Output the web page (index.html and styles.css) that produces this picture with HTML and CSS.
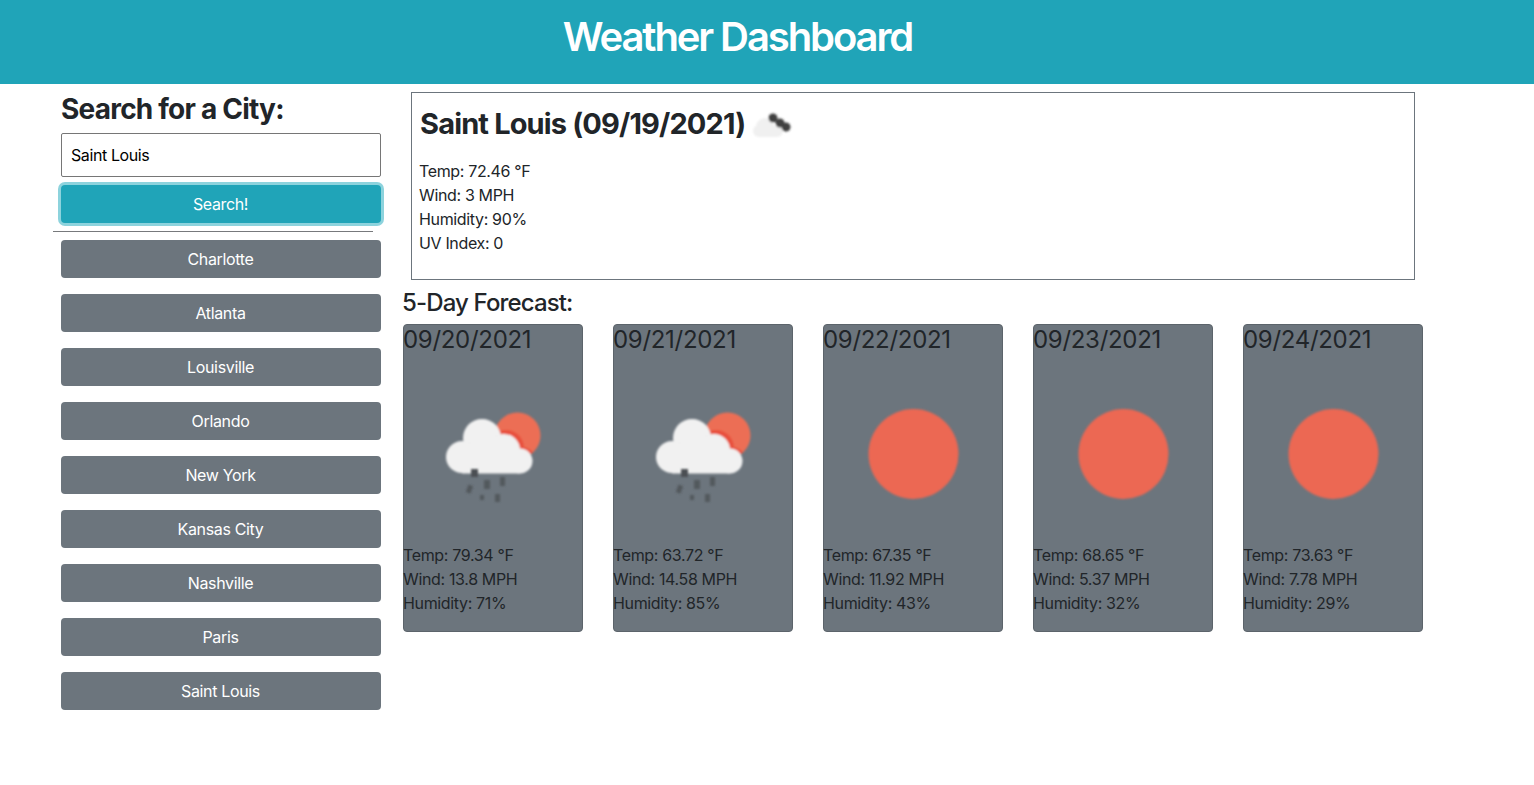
FILE: index.html
```html
<!DOCTYPE html>
<html lang="en">
<head>
<meta charset="utf-8">
<title>Weather Dashboard</title>
<link rel="stylesheet" href="styles.css">
</head>
<body>
<svg class="defs" width="0" height="0" aria-hidden="true">
  <defs>
    <filter id="soft" x="-10%" y="-10%" width="120%" height="120%"><feGaussianBlur stdDeviation="0.9"/></filter>
    <filter id="softer" x="-10%" y="-10%" width="120%" height="120%"><feGaussianBlur stdDeviation="1.2"/></filter>
    <filter id="drops" x="-30%" y="-30%" width="160%" height="160%"><feGaussianBlur stdDeviation="1.1"/></filter>
    <clipPath id="sun-disc"><circle cx="113.5" cy="72.5" r="23"/></clipPath>
    <symbol id="rain" viewBox="0 0 178 180">
      <g filter="url(#soft)">
        <circle cx="113.5" cy="72.5" r="23" fill="#ec6e55"/>
        <g fill="#e8503c" clip-path="url(#sun-disc)">
          <circle cx="102" cy="85" r="18"/>
          <circle cx="118" cy="97" r="13"/>
        </g>
        <g fill="#f1f1f1">
          <circle cx="78" cy="75" r="19"/>
          <circle cx="58" cy="94" r="16"/>
          <circle cx="100" cy="87" r="16"/>
          <circle cx="116" cy="98" r="12.5"/>
          <rect x="58" y="85" width="58" height="25.5"/>
        </g>
      </g>
      <g fill="#4b4f53" filter="url(#drops)">
        <rect x="67" y="106" width="7" height="8"/>
        <rect x="63" y="122" width="5" height="8" opacity=".75" transform="rotate(20 65 126)"/>
        <rect x="80" y="117" width="6" height="9" opacity=".75"/>
        <rect x="96" y="114" width="5" height="9" opacity=".75"/>
        <rect x="76" y="132" width="4" height="5" opacity=".75"/>
        <rect x="91" y="131" width="5" height="8" opacity=".75"/>
      </g>
    </symbol>
    <symbol id="sun" viewBox="0 0 178 180">
      <circle cx="89.5" cy="91" r="45" fill="#ec6753" filter="url(#softer)"/>
    </symbol>
    <symbol id="clouds" viewBox="0 0 50 50">
      <g filter="url(#soft)">
        <g fill="#f0f0f0">
          <circle cx="15" cy="26" r="9"/>
          <circle cx="9" cy="30" r="6"/>
          <circle cx="27" cy="30" r="6"/>
          <rect x="9" y="27" width="18" height="9"/>
        </g>
        <g fill="#3f3f3f">
          <circle cx="23" cy="17" r="4.5"/>
          <circle cx="30" cy="22" r="4.5"/>
          <circle cx="36" cy="26" r="4.5"/>
        </g>
      </g>
    </symbol>
  </defs>
</svg>
<header class="banner"><h1 class="banner-title">Weather Dashboard</h1></header>
<div class="page">
  <aside class="sidebar">
    <h3 class="search-title">Search for a City:</h3>
    <input class="search-input" type="text" value="Saint Louis" aria-label="City">
    <button class="btn btn-search" type="button">Search!</button>
    <hr class="rule">
    <div class="history">
      <button class="btn btn-city" type="button">Charlotte</button>
      <button class="btn btn-city" type="button">Atlanta</button>
      <button class="btn btn-city" type="button">Louisville</button>
      <button class="btn btn-city" type="button">Orlando</button>
      <button class="btn btn-city" type="button">New York</button>
      <button class="btn btn-city" type="button">Kansas City</button>
      <button class="btn btn-city" type="button">Nashville</button>
      <button class="btn btn-city" type="button">Paris</button>
      <button class="btn btn-city" type="button">Saint Louis</button>
    </div>
  </aside>
  <main class="main">
    <section class="current">
      <h2 class="current-title">Saint Louis (09/19/2021)<svg class="current-icon"><use href="#clouds"/></svg></h2>
      <p class="stats">Temp: 72.46 °F<br>Wind: 3 MPH<br>Humidity: 90%<br>UV Index: 0</p>
    </section>
    <h4 class="forecast-title">5-Day Forecast:</h4>
    <div class="forecast">
      <article class="card">
        <h4 class="card-date">09/20/2021</h4>
        <svg class="card-icon"><use href="#rain"/></svg>
        <p class="stats">Temp: 79.34 °F<br>Wind: 13.8 MPH<br>Humidity: 71%</p>
      </article>
      <article class="card">
        <h4 class="card-date">09/21/2021</h4>
        <svg class="card-icon"><use href="#rain"/></svg>
        <p class="stats">Temp: 63.72 °F<br>Wind: 14.58 MPH<br>Humidity: 85%</p>
      </article>
      <article class="card">
        <h4 class="card-date">09/22/2021</h4>
        <svg class="card-icon"><use href="#sun"/></svg>
        <p class="stats">Temp: 67.35 °F<br>Wind: 11.92 MPH<br>Humidity: 43%</p>
      </article>
      <article class="card">
        <h4 class="card-date">09/23/2021</h4>
        <svg class="card-icon"><use href="#sun"/></svg>
        <p class="stats">Temp: 68.65 °F<br>Wind: 5.37 MPH<br>Humidity: 32%</p>
      </article>
      <article class="card">
        <h4 class="card-date">09/24/2021</h4>
        <svg class="card-icon"><use href="#sun"/></svg>
        <p class="stats">Temp: 73.63 °F<br>Wind: 7.78 MPH<br>Humidity: 29%</p>
      </article>
    </div>
  </main>
</div>
</body>
</html>
```
FILE: styles.css
```css
* { box-sizing: border-box; }
html, body { margin: 0; }
body {
  font-family: Inter, "Liberation Sans", sans-serif;
  font-size: 16px;
  line-height: 24px;
  letter-spacing: -0.35px;
  color: #212529;
  background: #fff;
}
.defs { position: absolute; }
.banner {
  height: 84px;
  background: #20a4b8;
  display: flex;
  justify-content: center;
  padding: 13px 59px 0 0;
}
.banner-title { margin: 0; font-size: 40px; line-height: 48px; font-weight: 600; letter-spacing: -2.1px; color: #fff; }
.page { display: flex; }
.sidebar { width: 403px; padding: 8px 22px 0 61px; flex: none; }
.search-title { margin: 0 0 6px; font-size: 28px; line-height: 35px; font-weight: 700; letter-spacing: -0.78px; }
.search-input {
  display: block;
  width: 100%;
  height: 44px;
  padding: 0 9px;
  border: 1px solid #767676;
  border-radius: 2px;
  font: 16px Inter, "Liberation Sans", sans-serif;
  letter-spacing: -0.4px;
  color: #000;
  background: #fff;
}
.btn {
  display: block;
  width: 100%;
  height: 38px;
  padding: 0 1px 0 0;
  border: 0;
  border-radius: 4px;
  color: #fff;
  font: 16px/24px Inter, "Liberation Sans", sans-serif;
  letter-spacing: -0.35px;
  text-align: center;
}
.btn-search { margin-top: 8px; background: #20a4b8; box-shadow: 0 0 0 3px #8dd3dd; }
.rule { height: 1px; margin: 8px 8px 8px -8px; border: 0; background: #77797c; }
.history { display: flex; flex-direction: column; gap: 16px; }
.btn-city { background: #6c757d; }
.main { flex: 1; padding-top: 8px; }
.current {
  width: 1004px;
  height: 188px;
  margin-left: 8px;
  padding: 8px;
  border: 1px solid #6c757d;
}
.current-title {
  display: flex;
  align-items: flex-start;
  gap: 5px;
  height: 58px;
  margin: 0;
  font-size: 29px;
  line-height: 46px;
  font-weight: 700;
  letter-spacing: -0.85px;
}
.current-icon { width: 50px; height: 50px; flex: none; }
.stats { margin: 0 0 16px -1px; }
.forecast-title { margin: 8px 0 7px -1px; font-size: 24px; line-height: 29px; font-weight: 500; letter-spacing: -0.87px; }
.forecast { display: flex; gap: 30px; }
.card {
  width: 180px;
  height: 308px;
  background: #6c757d;
  border: 1px solid #5c646b;
  border-radius: 4px;
}
.card-date { margin: 0 0 8px -1px; font-size: 24px; line-height: 30px; font-weight: 400; letter-spacing: -0.3px; }
.card-icon { display: block; width: 178px; height: 180px; }
.card .stats { margin: 0 0 0 -1px; }
```
